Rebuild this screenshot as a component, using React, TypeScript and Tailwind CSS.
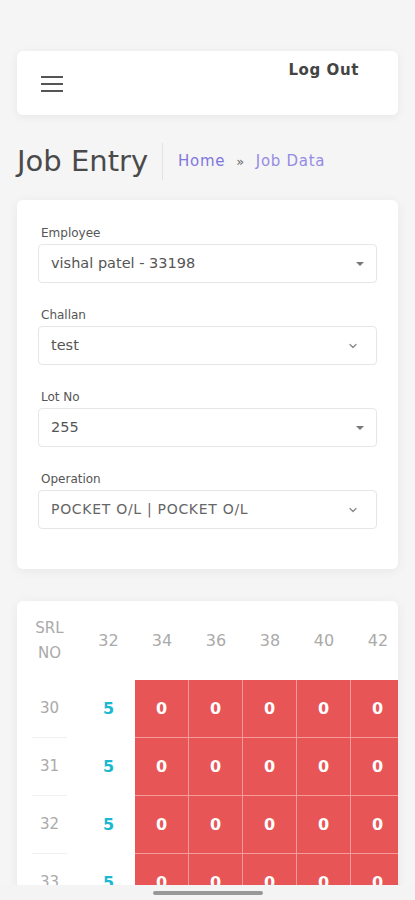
import { ChevronDown } from "lucide-react";

const font = { fontFamily: '"DejaVu Sans", "Open Sans", sans-serif' };

type Field = { label: string; value: string; kind: "caret" | "chevron"; small?: boolean };

const fields: Field[] = [
  { label: "Employee", value: "vishal patel - 33198", kind: "caret" },
  { label: "Challan", value: "test", kind: "chevron" },
  { label: "Lot No", value: "255", kind: "caret" },
  { label: "Operation", value: "POCKET O/L | POCKET O/L", kind: "chevron", small: true },
];

const sizes = ["34", "36", "38", "40", "42", "44"];
const rows = ["30", "31", "32", "33", "34"];

function SelectBox({ field }: { field: Field }) {
  return (
    <div className="flex flex-col">
      <label className="mb-[3px] ml-[3px] text-[12px] leading-[16px] text-[#555]">{field.label}</label>
      <div className="flex h-[39px] items-center justify-between rounded-[4px] border border-[#e6e6e6] bg-white pl-[12px] pr-[11px]">
        <span className={field.small ? "text-[14px] tracking-[0.7px] text-[#666]" : "text-[14.5px] text-[#555]"}>{field.value}</span>
        {field.kind === "caret" ? (
          <span className="mr-[1px] h-0 w-0 border-x-[4px] border-t-[4px] border-x-transparent border-t-[#777]" />
        ) : (
          <ChevronDown className="mr-[6px] size-[12px] text-[#888]" strokeWidth={2.5} />
        )}
      </div>
    </div>
  );
}

export default function App() {
  return (
    <div className="min-h-[900px] bg-[#f5f5f5] px-[17px] pt-[51px]" style={font}>
      {/* top bar */}
      <div className="flex h-[64px] items-start justify-between rounded-[6px] bg-white pl-[24px] pr-[39px] shadow-[0_2px_10px_rgba(0,0,0,0.06)]">
        <div className="mt-[25px] flex w-[22px] flex-col gap-[5px]">
          <span className="h-[2px] bg-[#555]" />
          <span className="h-[2px] bg-[#555]" />
          <span className="h-[2px] bg-[#555]" />
        </div>
        <span className="mt-[8px] text-[15px] font-semibold tracking-[0.6px] text-[#444]">Log Out</span>
      </div>

      {/* title + breadcrumb */}
      <div className="mt-[28px] flex h-[37px] items-center">
        <h1 className="text-[29px] leading-none text-[#4a4a4a]">Job Entry</h1>
        <span className="ml-[14px] h-[37px] w-px bg-[#e2e2e2]" />
        <nav className="ml-[15px] flex items-center gap-[11px] text-[15px] tracking-[0.7px] text-[#8077dd]">
          <span>Home</span>
          <span className="text-[13px] text-[#666]">»</span>
          <span className="text-[#948ce4]">Job Data</span>
        </nav>
      </div>

      {/* form card */}
      <div className="mt-[20px] flex flex-col gap-[24px] rounded-[6px] bg-white px-[21px] pb-[40px] pt-[25px] shadow-[0_2px_12px_rgba(0,0,0,0.06)]">
        {fields.map((f) => (
          <SelectBox key={f.label} field={f} />
        ))}
      </div>

      {/* table card */}
      <div className="mt-[32px] overflow-hidden rounded-t-[6px] bg-white shadow-[0_2px_12px_rgba(0,0,0,0.06)]">
        <div className="flex h-[79px] items-center text-[#aaa]">
          <div className="flex w-[65px] shrink-0 flex-col items-center text-[15px] leading-[25px]">
            <span>SRL</span>
            <span>NO</span>
          </div>
          <div className="w-[53px] shrink-0 text-center text-[16px]">32</div>
          {sizes.map((s) => (
            <div key={s} className="w-[54px] shrink-0 text-center text-[16px]">{s}</div>
          ))}
        </div>
        {rows.map((r) => (
          <div key={r} className="flex h-[58px]">
            <div className="flex w-[65px] shrink-0 items-center justify-center px-[15px]">
              <span className="flex h-full w-full items-center justify-center border-b border-[#f0f0f0] text-[15px] text-[#aaa]">{r}</span>
            </div>
            <div className="flex w-[53px] shrink-0 items-center justify-center text-[16px] font-bold text-[#1bb8d0]">5</div>
            {sizes.map((s) => (
              <div
                key={s}
                className="flex w-[54px] shrink-0 items-center justify-center border-b border-r border-[#f39a9a] bg-[#e85557] text-[16px] font-bold text-white"
              >
                0
              </div>
            ))}
          </div>
        ))}
      </div>

      {/* home indicator */}
      <div className="fixed bottom-0 left-0 right-0 flex h-[15px] items-center justify-center bg-[#f4f4f4]">
        <span className="h-[4px] w-[110px] rounded-full bg-[#999]" />
      </div>
    </div>
  );
}
